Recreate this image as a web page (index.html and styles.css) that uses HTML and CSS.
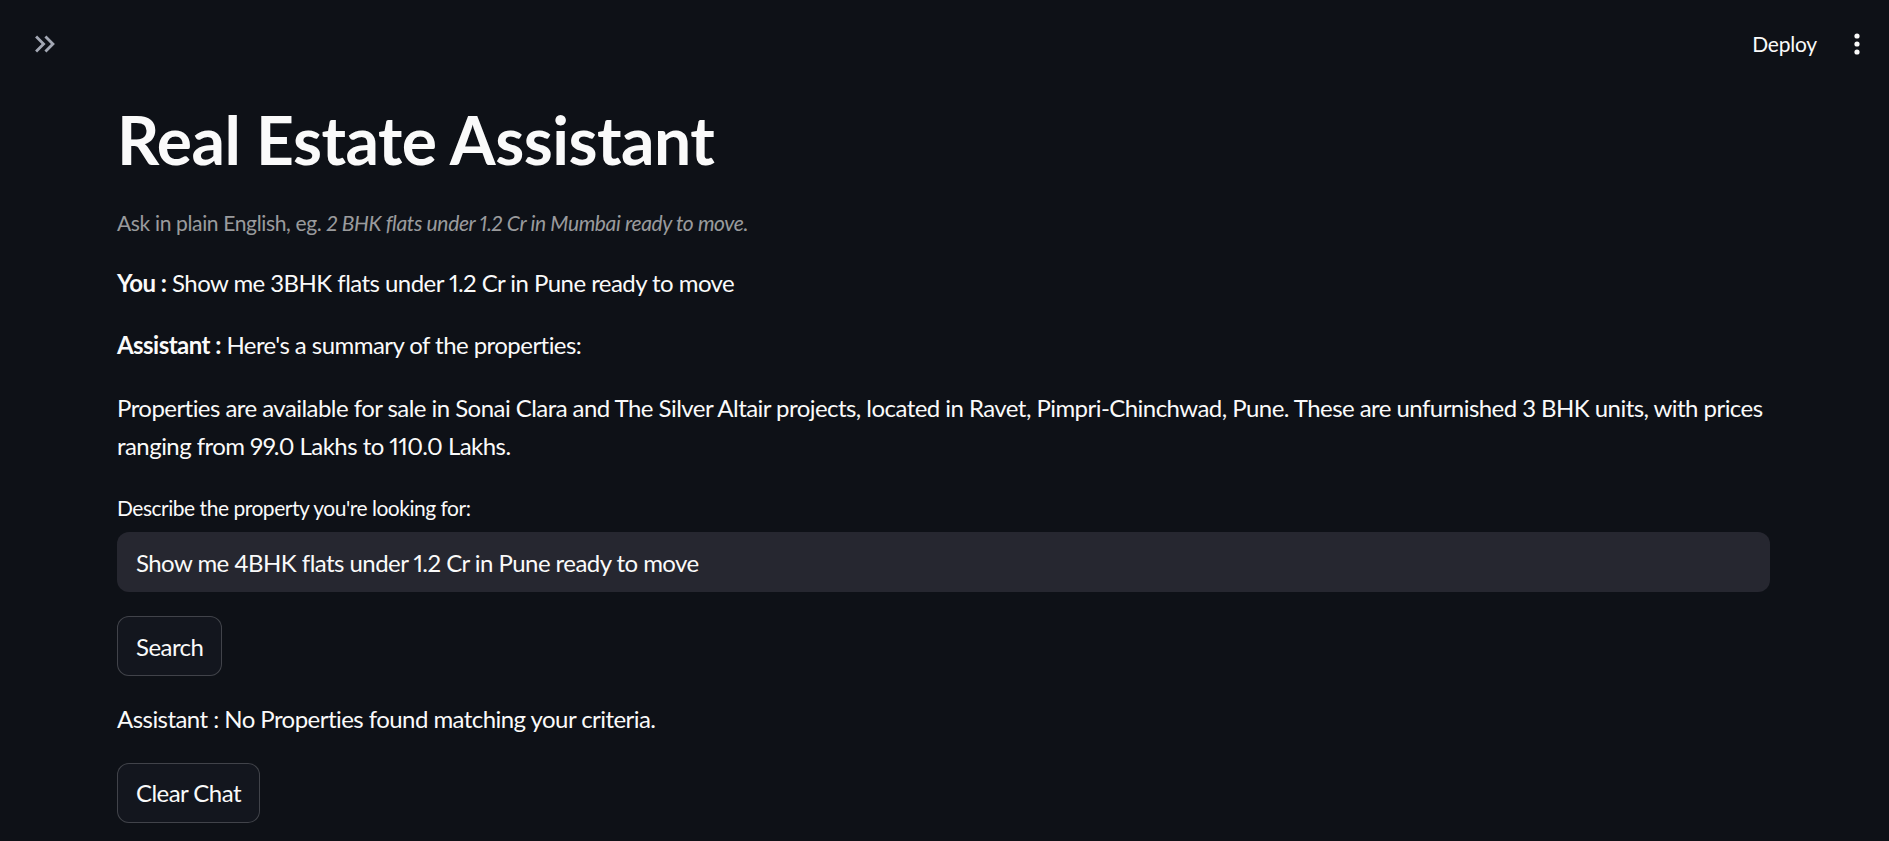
FILE: index.html
```html
<!DOCTYPE html>
<html lang="en">
<head>
<meta charset="utf-8">
<title>Real Estate Assistant</title>
<link rel="stylesheet" href="styles.css">
</head>
<body>
<header class="topbar">
  <button class="sidebar-toggle" aria-label="Open sidebar">
    <svg width="34" height="34" viewBox="0 0 24 24"><path fill="currentColor" d="M6.41 6L5 7.41 9.58 12 5 16.59 6.41 18l6-6zM13 6l-1.41 1.41L16.17 12l-4.58 4.59L13 18l6-6z"/></svg>
  </button>
  <div class="toolbar">
    <span class="deploy">Deploy</span>
    <svg class="menu" width="24" height="24" viewBox="0 0 24 24"><circle cx="12" cy="4" r="2.6" fill="#fafafa"/><circle cx="12" cy="12" r="2.6" fill="#fafafa"/><circle cx="12" cy="20" r="2.6" fill="#fafafa"/></svg>
  </div>
</header>
<main class="main">
  <h1 class="title">Real Estate Assistant</h1>
  <p class="caption">Ask in plain English, eg. <em>2 BHK flats under 1.2 Cr in Mumbai ready to move.</em></p>
  <p class="md"><strong>You :</strong> Show me 3BHK flats under 1.2 Cr in Pune ready to move</p>
  <p class="md"><strong>Assistant :</strong> Here's a summary of the properties:</p>
  <p class="md">Properties are available for sale in Sonai Clara and The Silver Altair projects, located in Ravet, Pimpri-Chinchwad, Pune. These are unfurnished 3 BHK units, with prices ranging from 99.0 Lakhs to 110.0 Lakhs.</p>
  <div class="field">
    <label class="label" for="q">Describe the property you're looking for:</label>
    <div class="input" id="q">Show me 4BHK flats under 1.2 Cr in Pune ready to move</div>
  </div>
  <div><button class="btn">Search</button></div>
  <p class="md">Assistant : No Properties found matching your criteria.</p>
  <div><button class="btn">Clear Chat</button></div>
</main>
</body>
</html>
```
FILE: styles.css
```css
html, body {
  margin: 0;
  background: #0e1117;
  color: #fafafa;
  font-family: "Lato", "Noto Sans", sans-serif;
  font-variant-numeric: proportional-nums;
}
body { overflow: hidden; height: 841px; }

.topbar {
  height: 87px;
  display: flex;
  align-items: center;
  justify-content: space-between;
  padding: 0 20px 0 28px;
}
.sidebar-toggle {
  background: none;
  border: none;
  padding: 0;
  color: #a3a8b4;
  display: flex;
}
.toolbar {
  display: flex;
  align-items: center;
  gap: 28px;
}
.deploy {
  font-size: 21px;
  letter-spacing: -0.2px;
  color: #fafafa;
  padding-bottom: 1px;
}

.main {
  width: 1653px;
  padding: 0 0 0 117px;
  display: flex;
  flex-direction: column;
  gap: 24px;
}
.title {
  margin: 13px 0 3px;
  font-size: 66px;
  font-weight: 700;
  line-height: 79.2px;
  letter-spacing: -0.5px;
}
.caption {
  margin: 0;
  font-size: 21px;
  line-height: 33.6px;
  letter-spacing: -0.35px;
  color: rgba(250, 250, 250, 0.6);
}
.md {
  margin: 0;
  font-size: 24px;
  line-height: 38.4px;
  letter-spacing: -0.55px;
}
.md strong { font-weight: 700; }

.field { display: flex; flex-direction: column; }
.label {
  min-height: 36px;
  margin-bottom: 7px;
  display: flex;
  align-items: center;
  font-size: 21px;
  letter-spacing: -0.48px;
}
.input {
  height: 60px;
  box-sizing: border-box;
  background: #262730;
  border-radius: 12px;
  padding: 0 19px;
  display: flex;
  align-items: center;
  font-size: 24px;
  letter-spacing: -0.55px;
  color: #fafafa;
}

.btn {
  height: 60px;
  box-sizing: border-box;
  padding: 0 18px;
  border: 1px solid rgba(250, 250, 250, 0.2);
  border-radius: 12px;
  background: #13161e;
  color: #fafafa;
  font-family: "Lato", "Noto Sans", sans-serif;
  font-variant-numeric: proportional-nums;
  font-size: 24px;
  letter-spacing: -0.55px;
}
```
